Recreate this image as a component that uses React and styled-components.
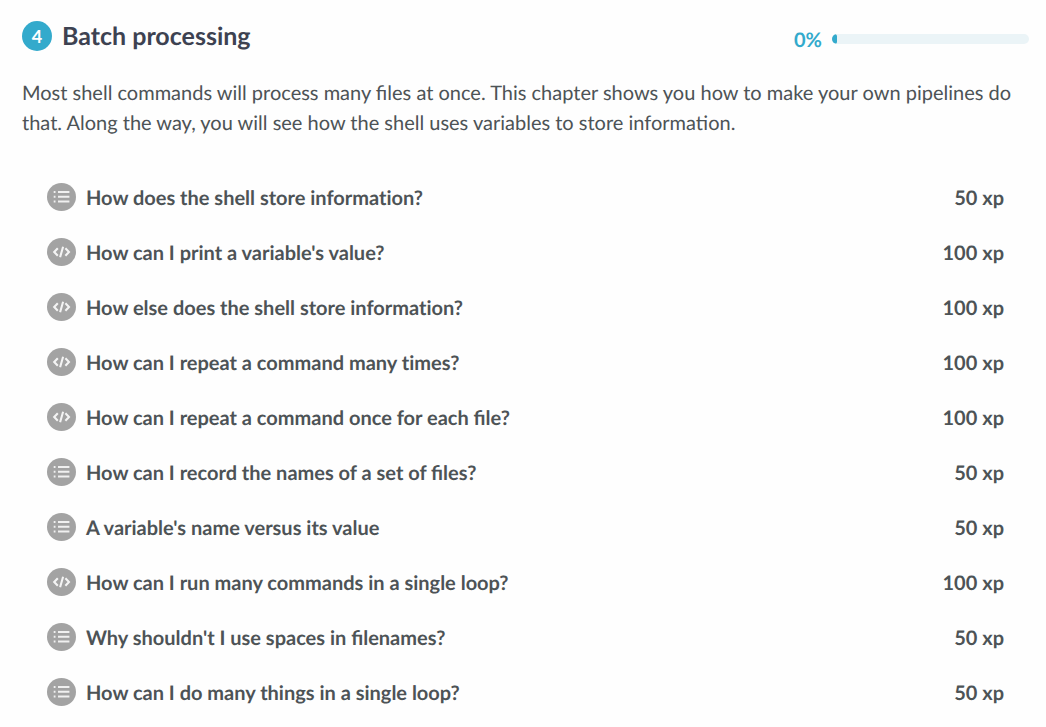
import React from "react";
import styled, { createGlobalStyle } from "styled-components";

const GlobalStyle = createGlobalStyle`
  *, *::before, *::after { box-sizing: border-box; }
  body {
    margin: 0;
    background: #fefefe;
    color: #4d5356;
    font-family: Lato, "Liberation Sans", sans-serif;
    font-size: 20px;
    line-height: 30px;
    text-rendering: geometricPrecision;
  }
`;

const Chapter = styled.main`
  padding: 20px 17px 0 22px;
`;

const Header = styled.header`
  display: flex;
  align-items: center;
  justify-content: space-between;
  height: 32px;
`;

const Heading = styled.div`
  display: flex;
  align-items: center;
  gap: 10px;
`;

const ChapterNumber = styled.span`
  display: grid;
  place-items: center;
  width: 30px;
  height: 30px;
  border-radius: 50%;
  background: #33aacc;
  color: #fff;
  font-size: 18px;
  font-weight: 700;
`;

const Title = styled.h1`
  margin: 0;
  color: #3d4251;
  font-size: 25px;
  line-height: 32px;
  font-weight: 700;
`;

const Progress = styled.div`
  display: flex;
  align-items: center;
  gap: 10px;
  padding-top: 6px;
`;

const Percent = styled.span`
  padding-top: 2px;
  color: #33aacc;
  font-weight: 700;
`;

const Track = styled.div`
  width: 197px;
  height: 10px;
  border-radius: 5px;
  background: #ebf4f7;
  overflow: hidden;
`;

const Fill = styled.div`
  width: 5px;
  height: 100%;
  border-radius: 5px;
  background: #33aacc;
`;

const Description = styled.p`
  margin: 26px 0 0;
`;

const Exercises = styled.ul`
  list-style: none;
  margin: 32px 0 0;
  padding: 0 25px;
`;

const Exercise = styled.li`
  height: 55px;
`;

const ExerciseLink = styled.a`
  display: flex;
  align-items: center;
  gap: 10px;
  height: 100%;
  color: inherit;
  font-weight: 700;
  text-decoration: none;
`;

const Badge = styled.svg`
  flex: none;
  width: 29px;
  height: 29px;
`;

const Name = styled.span`
  flex: 1;
  font-variant-ligatures: ${({ $ligatures }) => ($ligatures ? "normal" : "no-common-ligatures")};
`;

function ListIcon() {
  return (
    <Badge viewBox="0 0 29 29" aria-hidden="true">
      <ellipse cx="14.5" cy="14" rx="14.5" ry="14" fill="#a3a3a3" />
      <path
        d="M6.7 9h1.8M11 9h11.4M6.7 13.7h1.8M11 13.7h11.4M6.7 18.4h1.8M11 18.4h11.4"
        stroke="#f0f0f0"
        strokeWidth="2"
      />
    </Badge>
  );
}

function CodeIcon() {
  return (
    <Badge viewBox="0 0 29 29" aria-hidden="true">
      <ellipse cx="14.5" cy="14" rx="14.5" ry="14" fill="#a3a3a3" />
      <path
        d="M10.8 10.2L7.2 14l3.6 3.8M18.4 10.2l3.6 3.8-3.6 3.8M16.1 8.8l-3 10.4"
        fill="none"
        stroke="#f4f4f4"
        strokeWidth="2.1"
      />
    </Badge>
  );
}

const exercises = [
  { name: "How does the shell store information?", xp: 50 },
  { name: "How can I print a variable's value?", xp: 100, code: true },
  { name: "How else does the shell store information?", xp: 100, code: true },
  { name: "How can I repeat a command many times?", xp: 100, code: true },
  { name: "How can I repeat a command once for each file?", xp: 100, code: true },
  { name: "How can I record the names of a set of files?", xp: 50 },
  { name: "A variable's name versus its value", xp: 50 },
  { name: "How can I run many commands in a single loop?", xp: 100, code: true },
  { name: "Why shouldn't I use spaces in filenames?", xp: 50 },
  { name: "How can I do many things in a single loop?", xp: 50 },
];

export default function App() {
  return (
    <>
      <GlobalStyle />
      <Chapter>
        <Header>
          <Heading>
            <ChapterNumber>4</ChapterNumber>
            <Title>Batch processing</Title>
          </Heading>
          <Progress>
            <Percent>0%</Percent>
            <Track
              role="progressbar"
              aria-label="Chapter progress"
              aria-valuenow={0}
              aria-valuemin={0}
              aria-valuemax={100}
            >
              <Fill />
            </Track>
          </Progress>
        </Header>
        <Description>
          Most shell commands will process many files at once. This chapter shows you how to make
          your own pipelines do that. Along the way, you will see how the shell uses variables to
          store information.
        </Description>
        <Exercises>
          {exercises.map(({ name, xp, code }) => (
            <Exercise key={name}>
              <ExerciseLink href="#">
                {code ? <CodeIcon /> : <ListIcon />}
                <Name $ligatures={name.includes("fi")}>{name}</Name>
                <span>{xp} xp</span>
              </ExerciseLink>
            </Exercise>
          ))}
        </Exercises>
      </Chapter>
    </>
  );
}
